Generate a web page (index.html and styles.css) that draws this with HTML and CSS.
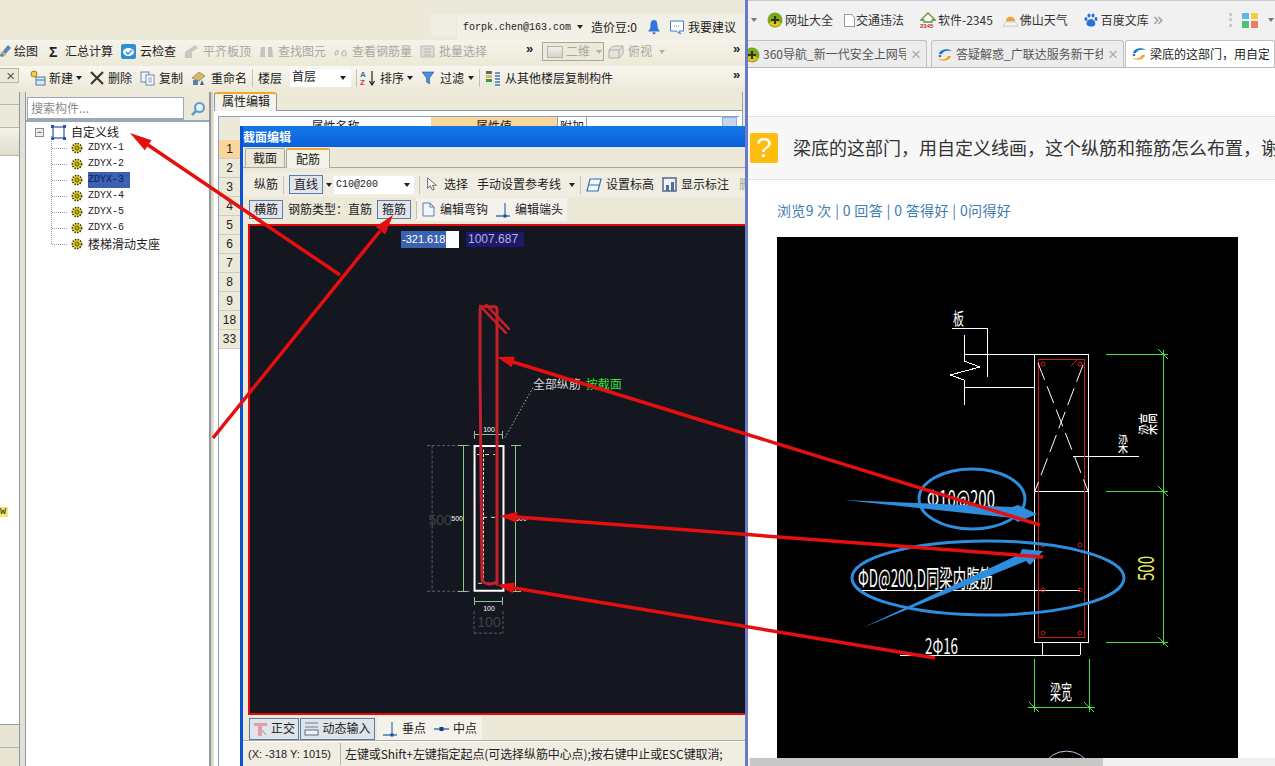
FILE: index.html
```html
<!DOCTYPE html>
<html lang="zh-CN">
<head>
<meta charset="utf-8">
<title>截面编辑</title>
<link rel="stylesheet" href="styles.css">
</head>
<body>
<svg class="defs" width="0" height="0" aria-hidden="true">
  <defs>
    <symbol id="gear" viewBox="0 0 12 12"><circle cx="6" cy="6" r="4.6" fill="#f2e02a" stroke="#3c3a10" stroke-width="1.6" stroke-dasharray="1.6 1.1"/><circle cx="6" cy="6" r="2.2" fill="#b8a818" stroke="#3c3a10" stroke-width=".7"/></symbol>
    <symbol id="swirl" viewBox="0 0 16 16"><path d="M2 7C3 2 11 1 15 4 10 3 6 4 5 7Z" fill="#1d78c8"/><path d="M14 9C13 14 5 15 1 12 6 13 10 12 11 9Z" fill="#f0a020"/><circle cx="3" cy="9" r="1.3" fill="#1d78c8"/></symbol>
    <symbol id="plus360" viewBox="0 0 16 16"><circle cx="8" cy="8" r="7.5" fill="#7aa81e"/><path d="M2 11A7 7 0 0 0 14 11L8 8Z" fill="#e8c020"/><path d="M8 4v8M4 8h8" stroke="#2a3a08" stroke-width="2.2"/></symbol>
    <symbol id="vline" viewBox="0 0 16 16"><path d="M1 14H15" stroke="#2f6fb5" stroke-width="1.4"/><path d="M10 1V14" stroke="#2f6fb5" stroke-width="1.2"/><rect x="8.5" y="12.5" width="3" height="3" fill="#1c4f90"/></symbol>
  </defs>
</svg>

<div class="desktop">
  <section class="app">
    <div class="userbar">
      <div class="userblank"></div>
      <div class="usermenu">
        <span class="mono">forpk.chen@163.com</span><i class="caret dark"></i>
        <span class="beans">造价豆:0</span>
        <svg class="ic14 bell" viewBox="0 0 14 16"><path d="M7 1C4 1 3.500 4 3.500 7S2 11 1 12.500H13C12 11 10.500 10 10.500 7S10 1 7 1Z" fill="#2f76d8"/><path d="M5 13.500H9L7 15.500Z" fill="#1f4f9a"/></svg>
        <svg class="ic16 speech" viewBox="0 0 16 16"><path d="M1.500 2H14.500V12H10L11.500 15 7 12H1.500Z" fill="#fff" stroke="#3b82c8"/><path d="M5 7H11" stroke="#3b82c8" stroke-dasharray="1 1"/></svg>
        <span class="advice">我要建议</span>
      </div>
    </div>

    <div class="toolbar tb-main">
      <span class="ti first"><svg class="ic12" viewBox="0 0 12 14"><path d="M0 12 9 1l3 3-8 9Z" fill="#5b86c4"/><path d="M2 8l5 3" stroke="#d8c24a" stroke-width="2"/></svg>绘图</span>
      <span class="ti sigma"><b class="sig">Σ</b>汇总计算</span>
      <span class="ti"><svg class="ic15" viewBox="0 0 15 15"><rect width="15" height="15" rx="2" fill="#2d8fd5"/><ellipse cx="7.500" cy="8" rx="5.500" ry="4" fill="#fff"/><path d="M5 8l2 2 4-4" stroke="#2d8fd5" stroke-width="1.500" fill="none"/></svg>云检查</span>
      <span class="ti off"><svg class="ic15" viewBox="0 0 15 15"><path d="M1 14V8L11 1l3 3-6 4v6Z" fill="#c8c8c0"/></svg>平齐板顶</span>
      <span class="ti off"><svg class="ic15" viewBox="0 0 15 15"><path d="M2 3h4v10H1ZM9 3h4l1 10H9Z" fill="#c4c4bc"/></svg>查找图元</span>
      <span class="ti off g5"><svg class="ic13" viewBox="0 0 13 13"><path d="M1 8c2-4 4-2 3 0S1 11 1 8ZM8 10c-1-4 4-6 4-2s-3 3-4 2Z" fill="none" stroke="#c4c4bc" stroke-width="1.500"/></svg>查看钢筋量</span>
      <span class="ti off"><svg class="ic15" viewBox="0 0 15 15"><path d="M1 2H14V13H1Z" fill="#dcdcd4" stroke="#bcbcb4"/><path d="M4 5H11M4 8H11M4 11H11" stroke="#b4b4ac"/></svg>批量选择</span>
      <span class="chev push31">»</span>
      <span class="combo2d"><i class="box2d"></i>二维<i class="caret pale"></i></span>
      <span class="ti off nudge"><svg class="ic16" viewBox="0 0 16 16"><path d="M1 6 5 2H15V10L11 14H1ZM1 6H11V14M11 6 15 2" fill="#e6e4da" stroke="#b0b0a8"/></svg>俯视<i class="caret pale"></i></span>
      <span class="chev end">»</span>
    </div>

    <div class="toolbar tb-second">
      <span class="ti"><svg class="ic16" viewBox="0 0 16 16"><circle cx="4" cy="4" r="3" fill="#f0d040" stroke="#a08020"/><rect x="6" y="7" width="9" height="8" fill="#dbe7f5" stroke="#5577a8"/><path d="M6 10H15" stroke="#5577a8"/></svg><span class="tight">新建</span><i class="caret dark"></i></span>
      <span class="ti"><svg class="ic14" viewBox="0 0 14 14"><path d="M1 1 13 13M13 1 1 13" stroke="#333" stroke-width="2"/></svg>删除</span>
      <span class="ti"><svg class="ic15" viewBox="0 0 15 15"><rect x="1" y="1" width="8" height="10" fill="#eef3fa" stroke="#6b87ad"/><rect x="6" y="4" width="8" height="10" fill="#fff" stroke="#6b87ad"/><path d="M8 7h4M8 9h4M8 11h4" stroke="#6b87ad" stroke-width=".8"/></svg>复制</span>
      <span class="ti g5"><svg class="ic15" viewBox="0 0 15 15"><path d="M1 7 8 1l6 4-6 5Z" fill="#d8b868" stroke="#7a6a30" stroke-width=".6"/><path d="M2 9h5v5H2Z" fill="#5a7fa8"/><path d="M9 14l2-5 2 5Z" fill="#3f64a8"/></svg>重命名</span>
      <i class="sep"></i>
      <span class="plain">楼层</span>
      <span class="combo floor"><span>首层</span><i class="caret dark"></i></span>
      <i class="sep sn"></i>
      <span class="ti"><svg class="ic16" viewBox="0 0 16 16"><text x="0" y="7" class="sorta">A</text><text x="0" y="15" class="sortz">Z</text><path d="M12 1V14M9.500 11 12 15 14.500 11" stroke="#222" fill="none" stroke-width="1.200"/></svg><span>排序</span><i class="caret dark"></i></span>
      <span class="ti g5"><svg class="ic14" viewBox="0 0 14 14"><path d="M1 1H13L8.500 7V13L5.500 11V7Z" fill="#4a90d8" stroke="#27609f" stroke-width=".6"/></svg><span>过滤</span><i class="caret dark"></i></span>
      <i class="sep"></i>
      <span class="ti"><svg class="ic16" viewBox="0 0 16 16"><rect x="1" y="1" width="6" height="3" fill="#666"/><rect x="1" y="5" width="6" height="3" fill="#d8b868"/><rect x="1" y="9" width="6" height="3" fill="#3a9a3a"/><path d="M10 3H15M10 6H15M10 9H15M10 12H15M10 15H15" stroke="#3f78b8" stroke-width="1.400"/></svg>从其他楼层复制构件</span>
      <span class="chev end">»</span>
    </div>

    <div class="workspace">
      <aside class="sidepanel">
        <div class="closebar"><span class="closex">×</span></div>
        <div class="siderow r22"></div>
        <div class="siderow"></div>
        <div class="siderow grad"></div>
        <div class="sidewhite"><span class="tag">w</span></div>
        <div class="siderow foot"></div>
        <div class="siderow foot last"></div>
      </aside>
      <div class="splitter"></div>
      <aside class="treepanel">
        <div class="search">
          <span class="searchbox">搜索构件...</span>
          <svg class="searchicon" viewBox="0 0 16 16"><circle cx="9.500" cy="6.500" r="4.500" fill="#e8f2fa" stroke="#5c9ccc" stroke-width="2"/><path d="M6 10 2 14" stroke="#5c9ccc" stroke-width="2.500"/></svg>
        </div>
        <div class="tree">
          <div class="root">
            <span class="expander">−</span>
            <svg class="ic15" viewBox="0 0 15 15"><rect x="2" y="2" width="11" height="11" fill="none" stroke="#2456a8" stroke-width="1.200"/><path d="M0 0h3v3H0ZM12 0h3v3h-3ZM0 12h3v3H0ZM12 12h3v3h-3Z" fill="#2456a8"/></svg>
            <span>自定义线</span>
          </div>
          <ul class="leaves">
            <li><svg class="gear"><use href="#gear"/></svg><span class="mono">ZDYX-1</span></li>
            <li><svg class="gear"><use href="#gear"/></svg><span class="mono">ZDYX-2</span></li>
            <li><svg class="gear"><use href="#gear"/></svg><span class="mono sel">ZDYX-3</span></li>
            <li><svg class="gear"><use href="#gear"/></svg><span class="mono">ZDYX-4</span></li>
            <li><svg class="gear"><use href="#gear"/></svg><span class="mono">ZDYX-5</span></li>
            <li><svg class="gear"><use href="#gear"/></svg><span class="mono">ZDYX-6</span></li>
            <li><svg class="gear"><use href="#gear"/></svg><span>楼梯滑动支座</span></li>
          </ul>
        </div>
      </aside>
      <div class="splitter two"></div>
      <main class="props">
        <div class="proptabs"><span class="proptab">属性编辑</span></div>
        <div class="propbody">
          <div class="grid">
            <div class="gridhead">
              <span class="gh corner"></span>
              <span class="gh name">属性名称</span>
              <span class="gh value">属性值</span>
              <span class="gh extra">附加</span>
              <span class="gh scroll"></span>
            </div>
            <div class="rownums">
              <span class="active">1</span><span>2</span><span>3</span><span>4</span><span>5</span><span>6</span><span>7</span><span>8</span><span>9</span><span>18</span><span>33</span>
            </div>
          </div>
        </div>
      </main>
    </div>
  </section>

  <section class="browser">
    <div class="favbar">
      <i class="caret grey"></i>
      <span class="fav"><svg class="ic16"><use href="#plus360"/></svg>网址大全</span>
      <span class="fav g1"><svg class="ic12" viewBox="0 0 12 14"><path d="M1 1H8L11 4V13H1Z" fill="#fff" stroke="#999"/></svg>交通违法</span>
      <span class="fav m6"><svg class="ic16" viewBox="0 0 16 16"><path d="M1 8 8 1l7 7H12V10H4V8Z" fill="#fff" stroke="#5a9a3a" stroke-width="1.300"/><text x="0" y="16" class="n2345">2345</text></svg>软件-2345</span>
      <span class="fav"><svg class="ic15" viewBox="0 0 16 16"><path d="M3 9a5 5 0 0 1 10 0Z" fill="#f0a030"/><path d="M0 14c1-4 6-6 8-4 3-2 7 0 8 4Z" fill="#f4f4f4" stroke="#c8c8c8"/></svg>佛山天气</span>
      <span class="fav m5"><svg class="ic16" viewBox="0 0 16 16"><rect width="16" height="16" fill="#eef3fb"/><g fill="#2d6fd0"><ellipse cx="3" cy="7" rx="1.500" ry="2"/><ellipse cx="6" cy="3.500" rx="1.500" ry="2"/><ellipse cx="10" cy="3.500" rx="1.500" ry="2"/><ellipse cx="13" cy="7" rx="1.500" ry="2"/><path d="M8 7c3 0 5 4 4 6s-6 2-8 0 1-6 4-6Z"/></g></svg>百度文库</span>
      <span class="more">»</span>
      <i class="grip"></i>
      <svg class="apps" viewBox="0 0 16 16"><rect x="0" y="1" width="7" height="6" fill="#5cb8ec"/><rect x="9" y="1" width="7" height="6" fill="#f2d23a"/><rect x="0" y="9" width="7" height="7" fill="#52c07c"/><rect x="9" y="9" width="7" height="7" fill="#ec7c64"/></svg>
      <i class="caret grey"></i>
    </div>
    <div class="tabs">
      <div class="tab t1"><svg class="ic16"><use href="#plus360"/></svg><span class="tabtext">360导航_新一代安全上网导航</span><span class="tabx">×</span></div>
      <div class="tab t2"><svg class="ic16"><use href="#swirl"/></svg><span class="tabtext">答疑解惑_广联达服务新干线</span><span class="tabx">×</span></div>
      <div class="tab t3"><svg class="ic16"><use href="#swirl"/></svg><span class="tabtext cur">梁底的这部门，用自定义线画</span></div>
    </div>
    <div class="page">
      <div class="qband">
        <span class="qmark">?</span>
        <h1 class="qtitle">梁底的这部门，用自定义线画，这个纵筋和箍筋怎么布置，谢谢</h1>
      </div>
      <p class="stats">浏览9 次 | 0 回答 | 0 答得好 | 0问得好</p>
      <div class="cad">
        <svg class="cadsvg" viewBox="777 237 461 529">
          <g class="w1">
            <path d="M952 328H987V377M964 335V361L980 367 950 375 964 380V405M964 354H1034M964 387H1034M1034 491H1088M1073 456H1139M860 590H1080M900 655H1080M1042 642V655M1080 642V655"/>
            <rect x="1034" y="354" width="54" height="288"/>
          </g>
          <rect class="r1" x="1038" y="359" width="46" height="278"/>
          <g class="r1 round">
            <circle cx="1043" cy="364" r="2"/><circle cx="1080" cy="364" r="2"/><circle cx="1043" cy="545" r="2"/><circle cx="1080" cy="545" r="2"/><circle cx="1043" cy="590" r="2"/><circle cx="1080" cy="590" r="2"/><circle cx="1043" cy="633" r="2"/><circle cx="1080" cy="633" r="2"/>
            <path d="M1071 366 1078 359"/>
          </g>
          <path class="xdash" d="M1038 363 1088 491M1083 365 1035 491"/>
          <g class="g1">
            <path d="M1106 354H1168M1106 491H1168M1106 642H1168M1163 350V645M1034 659V712M1089 659V712M1028 707H1095"/>
            <path d="M1158 349 1168 359M1158 486 1168 496M1158 637 1168 647M1029 702 1039 712M1084 702 1094 712"/>
          </g>
          <path class="arcline" d="M1043 766A26 26 0 0 1 1090 766"/>
          <text class="cadt v" x="953" y="325" textLength="11" lengthAdjust="spacingAndGlyphs">板</text>
          <text class="cadt hi" transform="translate(1156 435) rotate(-90)" textLength="22" lengthAdjust="spacingAndGlyphs">梁高</text>
          <text class="cadt hi" x="1118" y="452" textLength="10" lengthAdjust="spacingAndGlyphs">梁</text>
          <text class="cadt big" x="927" y="508" textLength="68" lengthAdjust="spacingAndGlyphs">Φ10@200</text>
          <text class="cadt big" x="858" y="587" textLength="135" lengthAdjust="spacingAndGlyphs">ΦD@200,D同梁内腹筋</text>
          <text class="cadt mid" x="925" y="654" textLength="33" lengthAdjust="spacingAndGlyphs">2Φ16</text>
          <text class="cadt hi" x="1050" y="700" textLength="22" lengthAdjust="spacingAndGlyphs">梁宽</text>
          <text class="cadt y" transform="translate(1154 581) rotate(-90)" textLength="25" lengthAdjust="spacingAndGlyphs">500</text>
        </svg>
      </div>
      <div class="hscroll"><span class="thumb"></span></div>
    </div>
  </section>

  <section class="dialog">
    <div class="dlgtitle">截面编辑</div>
    <div class="dlgtabs">
      <span class="dlgtab">截面</span>
      <span class="dlgtab on">配筋</span>
    </div>
    <div class="dlgbar row1">
      <span class="plain">纵筋</span>
      <i class="sep s2"></i>
      <span class="btn line">直线</span><i class="caret dark c2"></i>
      <span class="combo rebar"><span class="mono">C10@200</span><i class="caret dark"></i></span>
      <i class="sep s2"></i>
      <span class="ti g6 l1"><svg class="ic12" viewBox="0 0 12 16"><path d="M1 1V13L4 10 6.500 15 8.500 14 6.500 9.500H11Z" fill="#fff" stroke="#555"/></svg>选择</span>
      <span class="plain l4">手动设置参考线</span><i class="caret dark"></i>
      <i class="sep s2 l1"></i>
      <span class="ti"><svg class="ic16" viewBox="0 0 16 16"><path d="M4 2H15L12 14H1Z" fill="#f4f8fc" stroke="#2f70b8" stroke-width="1.200"/><path d="M3 8H13" stroke="#2f70b8"/></svg>设置标高</span>
      <span class="ti l3"><svg class="ic15" viewBox="0 0 15 15"><rect x="1" y="1" width="13" height="13" fill="#f2f2f2" stroke="#4a5f80" stroke-width="1.400"/><path d="M4 14V8H7V14M9 14V5H12V14" fill="#4a6fa0"/></svg>显示标注</span>
      <span class="plain off l6">删除</span>
    </div>
    <div class="dlgbar row2">
      <span class="btn">横筋</span>
      <span class="plain coloned">钢筋类型：</span>
      <span class="plain">直筋</span>
      <span class="btn">箍筋</span>
      <span class="litegroup edit">
        <i class="sep s3"></i>
        <span class="ti"><svg class="ic15" viewBox="0 0 15 15"><path d="M2 1H9L13 5V14H2Z" fill="#f2f6fb" stroke="#5c7da8"/><path d="M9 1V5H13" fill="none" stroke="#5c7da8"/></svg>编辑弯钩</span>
        <span class="ti"><svg class="ic16"><use href="#vline"/></svg>编辑端头</span>
      </span>
    </div>
    <div class="canvas">
      <svg class="drawing" viewBox="250 226 495 488">
        <g class="dashgrey">
          <path d="M432 446V592M427 446H470M427 592H470M474 634H503M474 612V634M503 612V634"/>
          <path class="dotted" d="M533 388 505 438"/>
        </g>
        <g class="green">
          <path d="M463 446V592M516 446V592M474 435H503M474 602H503M458 446H468M458 592H468M511 446H521M511 592H521M474 431V439M503 431V439M474 598V606M503 598V606"/>
        </g>
        <rect class="beam" x="474.500" y="446.500" width="29" height="145"/>
        <path class="innerdash" d="M496.500 450V585M483.500 450V585"/>
        <path class="yellowdash" d="M477 455H495M483 518H497M478 584H497"/>
        <text class="dim" x="489" y="432">100</text>
        <text class="dim" x="489" y="612">100</text>
        <text class="dim" x="457" y="522">500</text>
        <text class="dim" x="521" y="522">500</text>
        <text class="dimbig" x="440" y="526">500</text>
        <text class="dimbig" x="489" y="628">100</text>
        <text class="cap" x="533" y="389">全部纵筋</text>
        <text class="cap gr" x="586" y="389">按截面</text>
        <path class="rebarpath" d="M497 585V310Q497 307 494 307H483Q480 307 480 310V376L482 580Q482 584 490 585L497 583"/>
        <path class="rebarpath thin" d="M480 306 506 333M486 305 509 329"/>
      </svg>
      <span class="coord a"><span class="hl">-321.618</span></span>
      <span class="coord b">1007.687</span>
    </div>
    <div class="dlgbar bottom">
      <span class="btn wbtn w50"><svg class="ic15" viewBox="0 0 15 15"><path d="M1 2H14V5H9V15H5V5H1Z" fill="#e4a0a0"/><path d="M9 9l4 5" stroke="#8090a8"/></svg>正交</span>
      <span class="btn wbtn w75"><svg class="ic15" viewBox="0 0 15 15"><path d="M1 2H14M1 6H14" stroke="#6c7c94"/><rect x="1" y="9" width="13" height="5" fill="#eef1f5" stroke="#5c6c84"/></svg>动态输入</span>
      <span class="litegroup snap">
        <span class="ti"><svg class="ic16"><use href="#vline"/></svg>垂点</span>
        <span class="ti"><svg class="ic15" viewBox="0 0 15 15"><path d="M0 8H15" stroke="#2f6fb5" stroke-width="1.400"/><rect x="5.500" y="6" width="4" height="4" fill="#173f80"/></svg>中点</span>
      </span>
    </div>
    <div class="status">
      <span class="pos">(X: -318 Y: 1015)</span>
      <span class="hint">左键或Shift+左键指定起点(可选择纵筋中心点);按右键中止或ESC键取消;</span>
    </div>
  </section>

  <svg class="markup" viewBox="0 0 1275 766" aria-hidden="true">
    <g class="bluemark">
      <ellipse cx="972" cy="499" rx="53" ry="30"/>
      <ellipse cx="988" cy="578" rx="136" ry="37"/>
    </g>
    <g class="bluefill">
      <path d="M844 500 1012 507 1018 505 1037 514 1018 522 1012 518Z"/>
      <path d="M862 628 1020 554 1022 549 1043 551 1030 565 1026 561Z"/>
    </g>
    <g class="redline">
      <path d="M340 275 148 145M213 438 380 231M1040 525 513 362M1043 557 517 517M935 658 514 588"/>
    </g>
    <g class="redfill">
      <path d="M130 133 151.600 140.300 144.800 150.300Z"/>
      <path d="M393 215 385.100 234.400 375.700 226.800Z"/>
      <path d="M497 357 514.900 356.700 511.700 367.300Z"/>
      <path d="M500 516 517.400 511.800 516.600 522.800Z"/>
      <path d="M497 585 514.700 582.400 512.900 593.200Z"/>
    </g>
  </svg>
</div>
</body>
</html>
```

FILE: styles.css
```css
* { box-sizing: border-box; }
html, body { margin: 0; height: 100%; overflow: hidden; }
body {
  font: 12px/1.2 "Noto Sans CJK SC", "Liberation Sans", sans-serif;
  color: #222;
  background: #ece9d8;
}
.defs { position: absolute; }
i { font-style: normal; display: inline-block; flex: none; }
svg { flex: none; display: block; }
.ic12 { width: 12px; height: 14px; }
.ic13 { width: 13px; height: 13px; }
.ic14 { width: 14px; height: 16px; }
.ic15 { width: 15px; height: 15px; }
.ic16 { width: 16px; height: 16px; }
.mono { font: 10px/1.2 "Liberation Mono", monospace; }

.desktop { position: relative; display: flex; width: 1275px; height: 766px; overflow: hidden; }

/* main application */
.app {
  width: 748px; height: 766px; flex: none;
  display: flex; flex-direction: column;
  background: #ece9d8;
  border-right: 3px solid #6c78c8;
}
.userbar { height: 40px; padding: 14px 0 0 431px; display: flex; gap: 1px; flex: none; }
.userblank { width: 25px; height: 22px; background: #f0eee4; border-radius: 2px; }
.usermenu {
  flex: 1; height: 26px; padding: 0 0 0 6px;
  display: flex; align-items: center; gap: 6px;
  background: #f1efe6;
  white-space: nowrap;
}
.usermenu .mono { margin-top: 1px; }
.usermenu .caret.dark { margin-left: 0; }
.beans { margin-left: 2px; }
.bell { margin-left: 4px; }
.speech { margin-left: 2px; }
.advice { margin-left: -3px; }

.toolbar { display: flex; align-items: center; gap: 8px; height: 26px; flex: none; background: linear-gradient(#f5f3ea, #ece9d8); white-space: nowrap; }
.toolbar > *, .dlgbar > * { flex: none; }
.tb-main { padding: 0 0 3px 1px; }
.tb-second { padding: 0 0 2px 30px; background: linear-gradient(#f8f6ef, #ece9d8); }
.ti { display: inline-flex; align-items: center; gap: 4px; }
.ti.first { margin-left: -2px; gap: 3px; }
.ti.sigma { margin-left: 3px; }
.sig { font: bold 14px "Liberation Sans", sans-serif; width: 9px; margin-right: 3px; }
.off, .ti.off { color: #a8a8a0; }
.ti.g5 { gap: 5px; }
.ti.g6 { gap: 6px; }
.tight { margin-left: -1px; }
.chev { font: bold 13px/1 "Liberation Sans", sans-serif; color: #222; width: 8px; margin-top: -7px; }
.chev.push31 { margin-left: 31px; }
.chev.end { margin-left: auto; margin-right: 4px; }
.nudge { margin-left: -4px; }
.combo2d {
  width: 62px; height: 19px; display: flex; align-items: center; gap: 3px; padding: 0 4px;
  border: 1px solid #a8a8a0; color: #a8a8a0; background: #ece9d8;
}
.box2d { width: 16px; height: 12px; background: linear-gradient(#f0f0e8, #d4d4cc); border: 1px solid #b4b4ac; }
.caret { width: 0; height: 0; border: 3.500px solid transparent; border-bottom: 0; border-top: 4px solid #777; }
.caret.dark { border-top-color: #222; margin-left: 3px; }
.ti .caret.dark { margin-left: -1px; }
.caret.pale { border-top-color: #b0b0a8; margin-left: 3px; }
.caret.grey { border-top-color: #777; }
.sep { width: 1px; height: 18px; background: #c4c2b4; margin: 0 -3px; }
.sep.sn { margin-right: -5px; }
.sep.s2 { margin: 0; }
.sep.s3 { margin: 0 -3px 0 0; }
.combo { display: flex; align-items: center; justify-content: space-between; background: #fff; height: 18px; }
.combo.floor { width: 61px; padding: 0 5px 0 2px; }
.combo.floor span { margin-top: -4px; }
.combo .caret.dark { margin-left: 0; }
.sorta { font: bold 8px "Liberation Sans", sans-serif; fill: #2f6fb5; }
.sortz { font: bold 8px "Liberation Sans", sans-serif; fill: #c04040; }

.workspace { flex: 1; display: flex; min-height: 0; }
.sidepanel { width: 20px; display: flex; flex-direction: column; border-right: 1px solid #8a9aa8; }
.closebar { height: 15px; flex: none; margin-top: -24px; background: #ece9d8; border: 1px solid #b8b6a8; border-left: 0; font: 15px/13px "Liberation Sans", sans-serif; text-align: right; padding-right: 3px; color: #555; }
.siderow { height: 23px; border-bottom: 1px solid #b8b6a8; background: #ece9d8; flex: none; }
.siderow.r22 { height: 22px; }
.siderow.grad { height: 28px; background: linear-gradient(#f4f2ea, #e0ddcc); }
.sidewhite { flex: 1; background: #fff; border-bottom: 1px solid #9aa0a8; padding-top: 351px; }
.tag { display: block; width: 8px; height: 10px; overflow: hidden; background: #f8e56a; font: 10px/10px "Liberation Mono", monospace; }
.siderow.foot { height: 23px; background: #e8e5d4; }
.siderow.last { height: 18px; border-bottom: 0; }
.splitter { width: 6px; flex: none; background: #e4e2d2; border-right: 1px solid #8a98a8; }
.splitter.two { width: 4px; background: #d8d6c8; border-left: 2px solid #9098a0; border-right: 0; }

.treepanel { width: 183px; flex: none; display: flex; flex-direction: column; background: #ece9d8; }
.search { height: 30px; padding: 5px 0 0 1px; display: flex; gap: 6px; }
.searchbox { width: 157px; height: 23px; padding: 3px 3px; background: #fff; border: 1px solid #9aa8b8; border-bottom-width: 2px; color: #8a8a8a; }
.searchicon { width: 16px; height: 16px; margin-top: 4px; }
.tree { flex: 1; background: #fff; padding: 2px 0 0 9px; border-top: 2px solid #9aa8b8; margin-top: -2px; }
.root { display: flex; align-items: center; height: 16px; }
.expander { width: 9px; height: 9px; border: 1px solid #8a8a8a; font: 9px/6px "Liberation Sans", sans-serif; text-align: center; margin-right: 7px; background: #eee; }
.root svg { margin-right: 5px; }
.leaves { list-style: none; margin: 0; padding: 0 0 0 22px; position: relative; }
.leaves::before { content: ""; position: absolute; left: 16px; top: -4px; bottom: 8px; border-left: 1px dotted #999; }
.leaves li { height: 16px; display: flex; align-items: center; gap: 9px; position: relative; padding-left: 13px; }
.leaves li::before { content: ""; position: absolute; left: -5px; width: 15px; top: 8px; border-top: 1px dotted #999; }
.gear { width: 12px; height: 12px; position: relative; margin-left: 1px; margin-right: -4px; }
.mono.sel { background: #3a62b0; color: #0d1d5a; padding: 2px 6px 2px 0; height: 16px; line-height: 12px; }

.props { flex: 1; display: flex; flex-direction: column; padding-left: 1px; margin-right: 2px; border-right: 1px solid #9aa2a8; min-width: 0; }
.proptabs { height: 19px; flex: none; border-bottom: 1px solid #8c9aa8; }
.proptab { display: block; width: 63px; height: 19px; padding-left: 7px; background: #f4f3ea; border: 1px solid #8c9aa8; border-top: 2px solid #f0a830; border-bottom: 0; border-radius: 3px 3px 0 0; }
.propbody { flex: 1; background: #fff; padding: 5px 3px 0 4px; }
.grid { border-left: 1px solid #8ca0c0; height: 100%; }
.gridhead { display: flex; height: 24px; border-top: 1px solid #8ca0c0; text-align: center; }
.gh { display: block; height: 24px; line-height: 18px; background: #ece9d8; flex: none; }
.gh.corner { width: 21px; }
.gh.name { width: 191px; background: #fff; }
.gh.value { width: 126px; background: #f9d79a; }
.gh.extra { width: 30px; background: #fff; border-left: 1px solid #a0a0a0; border-right: 1px solid #a0a0a0; }
.gh.scroll { width: 15px; margin-left: auto; margin-right: 2px; background: #c6d4ec; border: 1px solid #9ab0d0; }
.rownums { width: 21px; display: flex; flex-direction: column; }
.rownums span { height: 19px; line-height: 18px; text-align: center; background: #ece9d8; border-bottom: 1px solid #cfcdbd; font-family: "Liberation Sans", sans-serif; }
.rownums .active { background: #fad69a; }

/* browser */
.browser { flex: 1; display: flex; flex-direction: column; background: #fff; min-width: 0; }
.favbar { height: 40px; flex: none; display: flex; align-items: center; gap: 10px; padding: 0 0 1px 3px; background: #f1f1f1; border-top: 1px solid #c8c8c8; white-space: nowrap; color: #333; }
.fav { display: inline-flex; align-items: center; gap: 2px; flex: none; }
.fav.g1 { gap: 1px; }
.fav.m6 { margin-left: 6px; }
.fav.m5 { margin-left: 5px; }
.more { font: 18px/1 "Liberation Sans", sans-serif; color: #999; margin-left: -6px; margin-top: -3px; flex: none; }
.grip { width: 3px; height: 14px; margin-left: 56px; border-left: 3px dotted #ccc; }
.apps { width: 16px; height: 16px; margin-left: 0; }
.n2345 { font: bold 6px "Liberation Sans", sans-serif; fill: #c03030; }
.tabs { height: 28px; flex: none; display: flex; gap: 4px; background: #f1f1f1; border-bottom: 1px solid #b8b8b8; overflow: hidden; }
.tab { height: 28px; display: flex; align-items: center; gap: 3px; padding: 0 5px; background: #ececec; border: 1px solid #c0c0c0; border-bottom: 0; border-radius: 3px 3px 0 0; flex: none; }
.tab.t1 { width: 189px; margin-left: -10px; }
.tab.t2 { width: 193px; }
.tab.t3 { flex: 1; margin-left: -3px; background: #fff; border-bottom: 1px solid #fff; min-width: 0; }
.tabtext { flex: 1; overflow: hidden; white-space: nowrap; color: #555; min-width: 0; }
.tabtext.cur { color: #222; }
.tabx { font: 17px/1 "Liberation Sans", sans-serif; color: #aaa; margin-left: 2px; }
.page { flex: 1; position: relative; padding-top: 48px; overflow: hidden; background: #fff; }
.qband { height: 64px; display: flex; align-items: center; gap: 15px; padding-left: 2px; background: #f7f7f7; border-top: 1px solid #e2e2e2; border-bottom: 1px solid #e2e2e2; white-space: nowrap; }
.qmark { width: 28px; height: 30px; flex: none; border-radius: 2px; background: #fcbd0c; color: #fff; font: 28px/30px "Liberation Sans", sans-serif; text-align: center; }
.qtitle { margin: 0; font-weight: 400; font-size: 18px; color: #333; }
.stats { margin: 20px 0 0 29px; height: 21px; font-size: 14px; line-height: 20px; color: #3d7cb0; white-space: nowrap; letter-spacing: .35px; }
.cad { width: 461px; height: 529px; margin: 16px 0 0 29px; background: #000; }
.cadsvg { width: 461px; height: 529px; }
.w1, .r1, .g1, .xdash, .arcline { fill: none; }
.w1 { stroke: #fff; stroke-width: 1; shape-rendering: crispEdges; }
.r1 { stroke: #c81e1e; stroke-width: 1; shape-rendering: crispEdges; }
.r1.round { shape-rendering: auto; }
.g1 { stroke: #3fe03f; stroke-width: 1; shape-rendering: crispEdges; }
.xdash { stroke: #fff; stroke-width: 1; stroke-dasharray: 18 7; }
.arcline { stroke: #b8c8f0; }
.cadt { font: 17px "Noto Sans CJK SC", sans-serif; fill: #fff; }
.cadt.v { font-size: 17px; }
.cadt.hi { font-size: 20px; }
.cadt.big { font-size: 24px; }
.cadt.mid { font-size: 21px; }
.cadt.y { fill: #f4f06a; font-size: 22px; }
.hscroll { position: absolute; left: 0; right: 0; bottom: 0; height: 8px; background: #f0f0f0; }
.thumb { display: block; width: 353px; height: 8px; margin-left: 2px; background: #c8c8c8; }

/* dialog */
.dialog {
  position: absolute; left: 240px; top: 126px; width: 505px; height: 640px;
  display: flex; flex-direction: column;
  background: #ece9d8;
  border-left: 3px solid #0a52d0;
  overflow: hidden;
}
.dlgtitle { height: 21px; flex: none; padding-left: 0; background: linear-gradient(#1478e6, #0a60dc); color: #fff; font-weight: 700; line-height: 21px; }
.dlgtabs { height: 21px; flex: none; display: flex; align-items: flex-end; gap: 1px; padding-left: 2px; border-bottom: 1px solid #a8a8a0; }
.dlgtab { width: 40px; height: 19px; text-align: center; line-height: 18px; background: #ece9d8; border: 1px solid #a8a8a0; border-bottom: 0; border-radius: 2px 2px 0 0; }
.dlgtab.on { width: 44px; height: 20px; background: #f4f3ea; border-top: 2px solid #f0a830; margin-bottom: -1px; }
.dlgbar { display: flex; align-items: center; gap: 5px; white-space: nowrap; flex: none; }
.row1 { height: 25px; margin-top: 4px; padding-left: 11px; background: #f0eee2; }
.row2 { height: 25px; padding-left: 6px; }
.coloned { margin-right: -5px; }
.litegroup { display: flex; align-items: center; background: #f4f2ea; height: 23px; }
.litegroup.edit { gap: 7px; padding-right: 4px; }
.litegroup.snap { gap: 8px; padding: 0 5px; margin-left: 1px; }
.btn { display: inline-flex; align-items: center; justify-content: center; gap: 3px; height: 19px; padding: 0 4px; background: #e2e5ec; border: 1px solid #5c7ca8; }
.btn.line { width: 34px; padding: 0; }
.caret.dark.c2 { margin: 0 -3px 0 -2px; }
.combo.rebar { width: 80px; padding: 0 4px 0 2px; }
.l1 { margin-left: 1px; }
.l3 { margin-left: 3px; }
.l4 { margin-left: 4px; }
.l6 { margin-left: 5px; }
.canvas { position: relative; flex: none; width: 497px; height: 491px; margin: 2px 0 0 5px; background: #14171f; border: 2px solid #e00b0b; border-right: 0; }
.drawing { width: 495px; height: 487px; }
.dashgrey { fill: none; stroke: #5a5e66; stroke-dasharray: 3 2; }
.dashgrey .dotted { stroke: #b0b4b8; stroke-dasharray: 1.500 2; }
.green { fill: none; stroke: #8fc98a; shape-rendering: crispEdges; }
.beam { fill: none; stroke: #fff; stroke-width: 2; }
.innerdash { fill: none; stroke: #e8e8e8; stroke-dasharray: 3 1.500; }
.yellowdash { fill: none; stroke: #e8dc90; stroke-dasharray: 4 4; }
.dim { font: 7px "Liberation Sans", sans-serif; fill: #fff; text-anchor: middle; }
.dimbig { font: 14px "Liberation Sans", sans-serif; fill: #3f434c; text-anchor: middle; }
.cap { font-size: 12px; fill: #d8d8d8; }
.cap.gr { fill: #38e038; }
.rebarpath { fill: none; stroke: #c4202c; stroke-width: 3; stroke-linecap: round; }
.rebarpath.thin { stroke-width: 2.500; }
.coord { position: absolute; top: 5px; height: 17px; font: 11px/17px "Liberation Sans", sans-serif; }
.coord.a { left: 151px; width: 58px; background: #fff; }
.hl { display: inline-block; width: 45px; padding-left: 1px; background: #3a62b0; color: #fff; white-space: nowrap; overflow: hidden; }
.coord.b { left: 215px; width: 60px; padding-left: 2px; background: #1e1a66; border: 1px solid #12103c; line-height: 15px; font-size: 12px; color: #b0b4e0; }
.bottom { height: 24px; margin-top: 2px; padding-left: 6px; gap: 1px; border-bottom: 1px solid #a8a8a0; }
.wbtn { height: 22px; padding: 0 2px; background: #dfe3ea; }
.w50 { width: 50px; }
.w75 { width: 75px; }
.status { flex: 1; display: flex; align-items: center; padding-left: 5px; background: #f0eee2; border-top: 1px solid #fff; white-space: nowrap; }
.pos { width: 92px; font: 11px "Liberation Sans", sans-serif; }
.hint { padding-left: 4px; border-left: 1px solid #b8b6a8; line-height: 22px; letter-spacing: -.1px; }

/* markup drawn over the screenshot */
.markup { position: absolute; left: 0; top: 0; width: 1275px; height: 766px; pointer-events: none; }
.bluemark { fill: none; stroke: #2d8ee0; stroke-width: 3; }
.bluefill { fill: #2d8ee0; }
.redline { fill: none; stroke: #e60f10; stroke-width: 3.500; }
.redfill { fill: #e60f10; }
```
